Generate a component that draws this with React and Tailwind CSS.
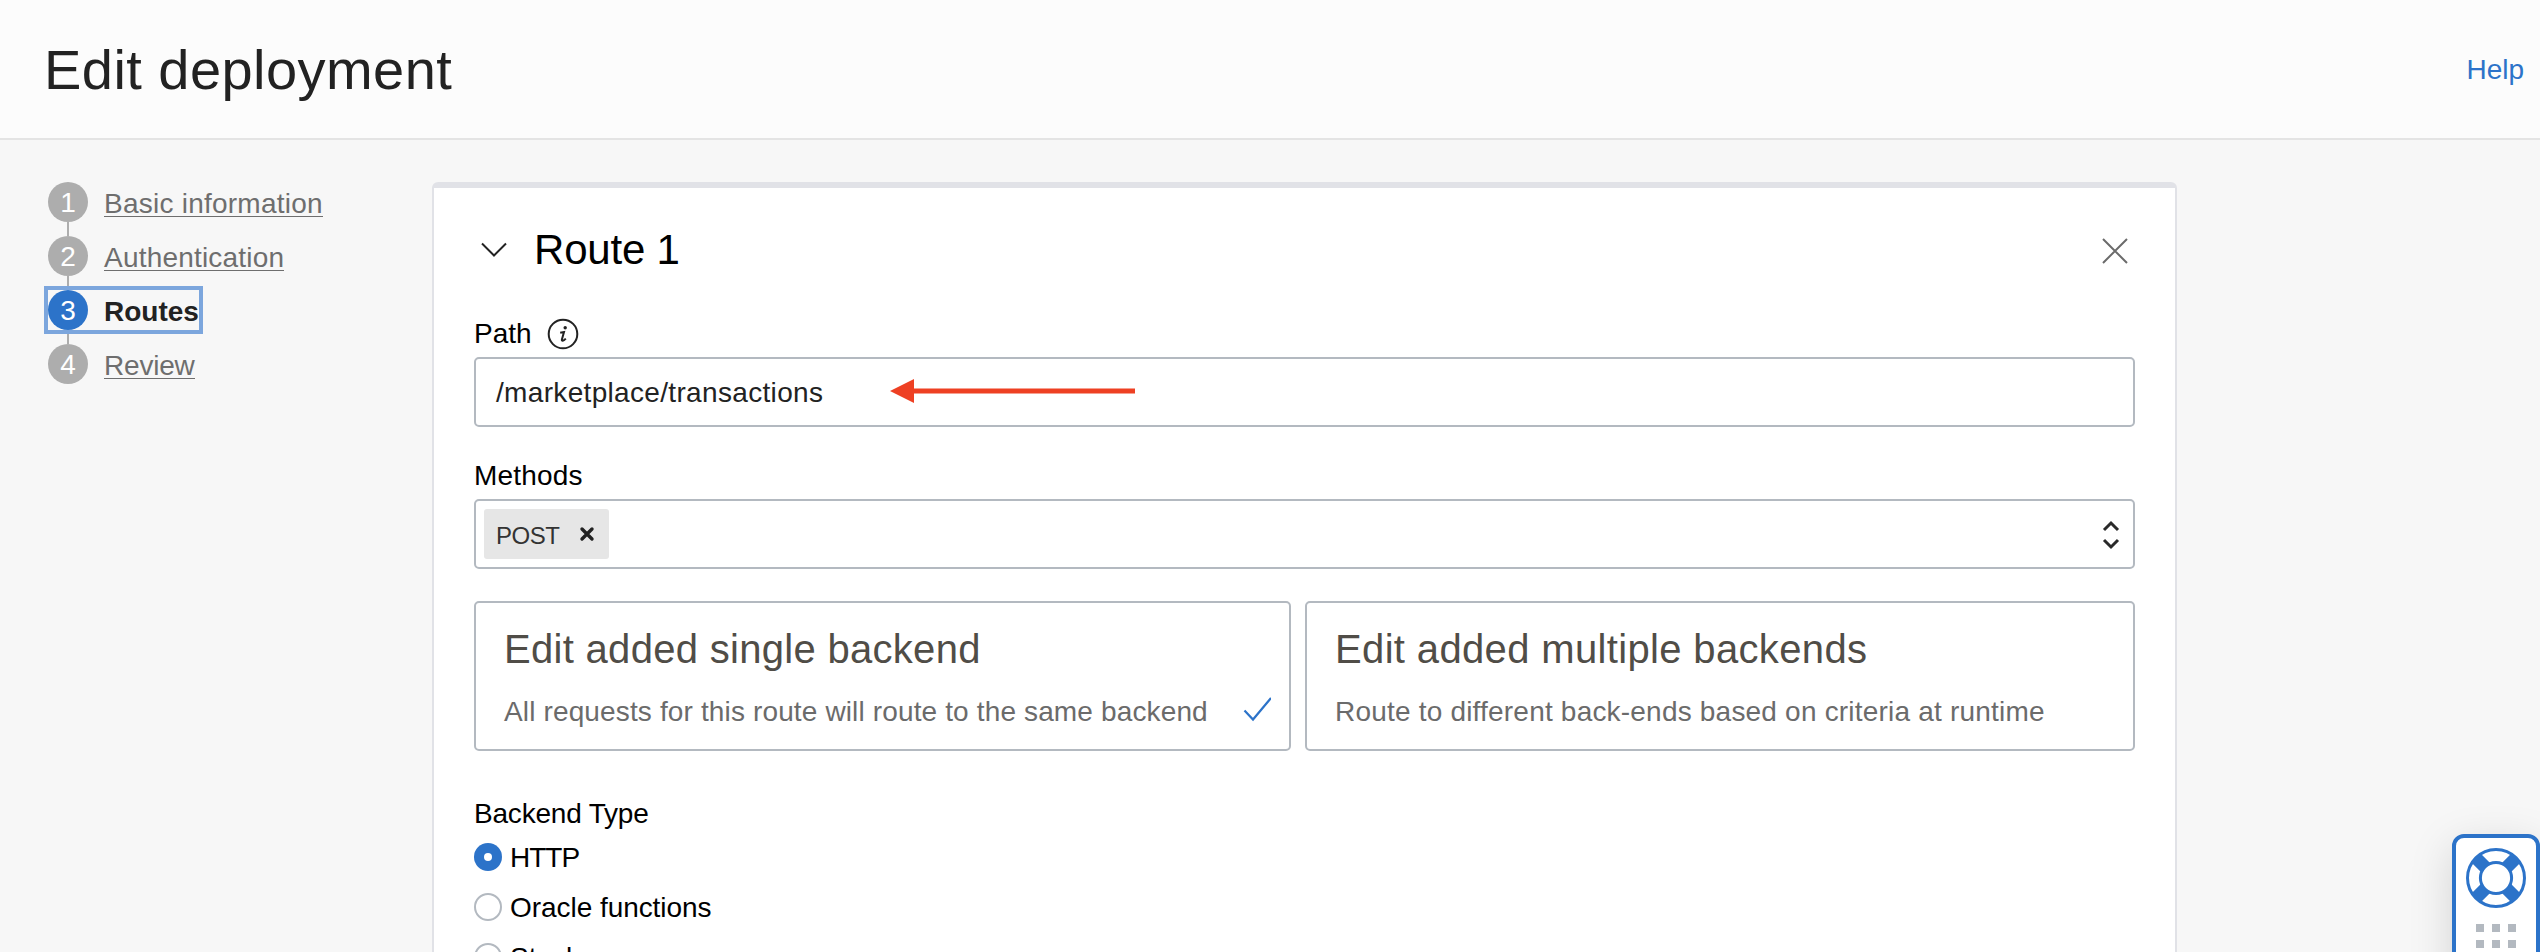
const steps = [
  { n: 1, label: 'Basic information', spacing: 'tracking-[0.24px]' },
  { n: 2, label: 'Authentication', spacing: 'tracking-[0.2px]' },
  { n: 3, label: 'Routes', active: true },
  { n: 4, label: 'Review', spacing: 'tracking-[-0.2px]' },
];

function Step({ step, last }) {
  return (
    <li className="relative flex h-[54px]">
      {!last && <span className="absolute left-[19px] top-[40px] h-[14px] w-[2px] bg-[#adadad]" />}
      <div className={`relative flex h-10 items-start gap-4 ${step.active ? 'outline-4 outline-[#7ca6dd]' : ''}`}>
        <span className={`flex size-10 justify-center rounded-full leading-[41px] text-white ${step.active ? 'bg-[#2c73c9]' : 'bg-[#adadad]'}`}>
          {step.n}
        </span>
        {step.active ? (
          <span className="h-[35px] font-bold leading-[43px] text-[#222]">{step.label}</span>
        ) : (
          <span className={`h-[35px] border-b border-[#6e6e6e] leading-[43px] text-[#6e6e6e] ${step.spacing}`}>{step.label}</span>
        )}
      </div>
    </li>
  );
}

function BackendCard({ title, text, selected, width, titleSpacing, textSpacing }) {
  return (
    <div className={`flex h-[150px] items-end justify-between rounded-[5px] border-2 border-[#b3b9c0] pb-[21px] pl-[28px] pr-[18px] ${width}`}>
      <div className="whitespace-nowrap">
        <h3 className={`text-[40px] leading-[48px] text-[#504d47] ${titleSpacing}`}>{title}</h3>
        <p className={`mt-[23px] leading-[32px] text-[#6b6b6b] ${textSpacing}`}>{text}</p>
      </div>
      {selected && (
        <svg className="mb-[6px] h-[26px] w-[28px]" viewBox="0 0 28 26" fill="none" stroke="#2c73c9" strokeWidth="2.2">
          <path d="M1.5 14.5 L10 23.5 L28 2" />
        </svg>
      )}
    </div>
  );
}

function Radio({ label, checked, spacing }) {
  return (
    <label className="flex h-[50px] shrink-0 items-start gap-[8px]">
      {checked ? (
        <span className="flex size-7 items-center justify-center rounded-full bg-[#2c73c9]">
          <span className="size-2 rounded-full bg-white" />
        </span>
      ) : (
        <span className="size-7 rounded-full border-2 border-[#b3b9c0] bg-white" />
      )}
      <span className={`-mt-px leading-8 ${spacing}`}>{label}</span>
    </label>
  );
}

function HelpWidget() {
  return (
    <div className="absolute left-[2452px] top-[834px] flex h-[200px] w-[88px] flex-col items-center rounded-[12px] border-4 border-[#2c73c9] bg-white pt-[10px] shadow-[0_12px_44px_rgba(0,0,0,0.15)]">
      <svg className="size-[60px] shrink-0" viewBox="0 0 60 60">
        <circle cx="30" cy="30" r="28.5" fill="#fff" stroke="#2c73c9" strokeWidth="3" />
        <path d="M10.5 10.5 L49.5 49.5 M49.5 10.5 L10.5 49.5" stroke="#2c73c9" strokeWidth="13" />
        <circle cx="30" cy="30" r="15.6" fill="#fff" stroke="#2c73c9" strokeWidth="3" />
      </svg>
      <div className="mt-[16px] grid grid-cols-3 gap-2">
        {Array.from({ length: 9 }, (_, i) => (
          <span key={i} className="size-2 bg-[#b3b9c0]" />
        ))}
      </div>
    </div>
  );
}

export default function App() {
  return (
    <div className="relative h-[952px] w-[2540px] overflow-hidden bg-[#f7f7f7] font-['Liberation_Sans',Arial,sans-serif] text-[28px] leading-8 text-black">
      <header className="flex h-[140px] items-center justify-between border-b-2 border-[#e4e4e4] bg-[#fcfcfc] pl-[44px] pr-[16px] pt-[2px]">
        <h1 className="text-[56px] leading-[64px] tracking-[0.45px] text-[#222]">Edit deployment</h1>
        <a className="text-[#2c73c9]">Help</a>
      </header>

      <main className="flex items-start pt-[42px]">
        <nav className="w-[432px] pl-12">
          <ol>
            {steps.map((s, i) => (
              <Step key={s.n} step={s} last={i === steps.length - 1} />
            ))}
          </ol>
        </nav>

        <section className="h-[800px] w-[1745px] rounded-[6px] border-2 border-t-[6px] border-[#e1e2e7] bg-white px-[40px]">
          <div className="flex h-[129px] items-start pt-[37px]">
            <svg className="ml-[7px] mt-[17px] h-[16px] w-[26px]" viewBox="0 0 26 16" fill="none" stroke="#222" strokeWidth="2">
              <path d="M1 1.5 L13 13.5 L25 1.5" />
            </svg>
            <h2 className="ml-[27px] mt-px text-[42px] leading-[48px] tracking-[-0.2px]">Route 1</h2>
            <svg className="ml-auto mr-[7px] mt-[13px] size-[26px]" viewBox="0 0 26 26" fill="none" stroke="#6b6b6b" strokeWidth="2">
              <path d="M1 1 L25 25 M25 1 L1 25" />
            </svg>
          </div>

          <div className="flex h-[40px] items-start">
            <span className="mt-px">Path</span>
            <svg className="ml-[15px] mt-[1px] size-[32px]" viewBox="0 0 32 32" fill="none" stroke="#222">
              <circle cx="16" cy="16" r="14.3" strokeWidth="2" />
              <circle cx="18.2" cy="9.8" r="1.7" fill="#222" stroke="none" />
              <path d="M13.2 14.8 L17 14 L14.9 21.4 C14.5 23.2 16.2 23.2 18.8 20.6" strokeWidth="2" />
            </svg>
          </div>

          <div className="flex h-[70px] items-center rounded-[5px] border-2 border-[#b3b9c0] pl-[20px] text-[#222]">
            <span className="mt-[2px] tracking-[0.33px]">/marketplace/transactions</span>
            <svg className="-mt-[2px] ml-[66px] h-[26px] w-[246px]" viewBox="0 0 246 26" fill="#ee4023">
              <path d="M1 13 L25 1 V10.5 H246 V15.5 H25 V25 Z" />
            </svg>
          </div>

          <div className="mt-[33px] h-[39px] tracking-[0.2px]">Methods</div>
          <div className="flex h-[70px] items-center justify-between rounded-[5px] border-2 border-[#b3b9c0] pl-[8px] pr-[13px]">
            <div className="flex h-[50px] w-[125px] items-center rounded-[3px] bg-[#e6e6e6] pl-[12px] text-[24px] text-[#333]">
              <span className="mt-[3px] tracking-[-0.5px]">POST</span>
              <svg className="ml-[20px] size-[16px]" viewBox="0 0 16 16" stroke="#222" strokeWidth="3.4" strokeLinecap="round">
                <path d="M3 3 L13 13 M13 3 L3 13" />
              </svg>
            </div>
            <svg className="mt-[2px] h-[30px] w-[18px]" viewBox="0 0 18 30" fill="none" stroke="#2a2a2a" strokeWidth="3">
              <path d="M2 10 L9 3 L16 10 M2 20 L9 27 L16 20" />
            </svg>
          </div>

          <div className="mt-[32px] flex gap-[14px]">
            <BackendCard
              title="Edit added single backend"
              text="All requests for this route will route to the same backend"
              selected
              width="w-[817px]"
              titleSpacing="tracking-[0.3px]"
              textSpacing="tracking-[0.14px]"
            />
            <BackendCard
              title="Edit added multiple backends"
              text="Route to different back-ends based on criteria at runtime"
              width="w-[830px]"
              titleSpacing="tracking-[0.35px]"
              textSpacing="tracking-[0.2px]"
            />
          </div>

          <div className="mt-[47px] h-[45px] tracking-[-0.2px]">Backend Type</div>
          <Radio label="HTTP" checked spacing="tracking-[-1px]" />
          <Radio label="Oracle functions" spacing="tracking-[-0.05px]" />
          <Radio label="Stock response" />
        </section>
      </main>

      <HelpWidget />
    </div>
  );
}
